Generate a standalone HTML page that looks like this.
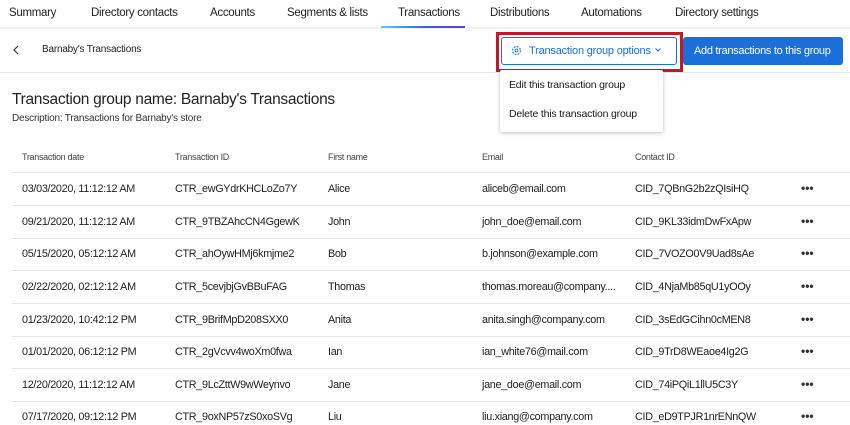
<!DOCTYPE html><html><head><style>
*{margin:0;padding:0;box-sizing:border-box}
body{width:850px;height:425px;overflow:hidden;background:#fff;font-family:"Liberation Sans",sans-serif;color:#1a1a1a;position:relative;font-size:11.5px}
.a{position:absolute;white-space:nowrap}
.tab{position:absolute;top:7px;font-size:11.5px;color:#222;letter-spacing:-0.3px}
.row{position:absolute;left:12px;width:838px;height:1px;background:#e6e6e6}
.c{position:absolute;font-size:10.8px;color:#222;letter-spacing:-0.3px}
.h{font-size:9px;color:#444}
.dots{position:absolute;left:801px;font-size:12px;font-weight:bold;letter-spacing:0px;color:#333}
</style></head><body>
<div class="tab" style="left:9px">Summary</div>
<div class="tab" style="left:91px">Directory contacts</div>
<div class="tab" style="left:210px">Accounts</div>
<div class="tab" style="left:287px">Segments &amp; lists</div>
<div class="tab" style="left:398px">Transactions</div>
<div class="tab" style="left:490px">Distributions</div>
<div class="tab" style="left:581px">Automations</div>
<div class="tab" style="left:675px">Directory settings</div>
<div class="a" style="left:0;top:27px;width:850px;height:2px;background:#f2f2f2"></div>
<div class="a" style="left:381px;top:26px;width:84px;height:2px;background:linear-gradient(90deg,#6ad0e8,#3a62d8,#6a3cc8)"></div>
<div class="a" style="left:0;top:72px;width:850px;height:1px;background:#e6e6e6"></div>
<svg class="a" style="left:13px;top:45px" width="6" height="10" viewBox="0 0 6 10"><path d="M5 1L1 5l4 4" fill="none" stroke="#333" stroke-width="1.2"/></svg>
<div class="a" style="left:42px;top:44px;font-size:10px;color:#222;letter-spacing:-0.2px">Barnaby's Transactions</div>
<div class="a" style="left:496px;top:32px;width:187px;height:40px;border:3px solid #c01a2a"></div>
<div class="a" style="left:501px;top:37px;width:176px;height:28px;border:1px solid #1a6fd8;border-radius:3px;color:#1a6fd8;font-size:11px;padding:7px 0 0 27px;letter-spacing:-0.2px">Transaction group options</div>
<svg class="a" style="left:655px;top:48px" width="6" height="4" viewBox="0 0 6 4"><path d="M.5.5l2.5 2.5L5.5.5" fill="none" stroke="#1a6fd8" stroke-width="1"/></svg>
<svg class="a" style="left:511px;top:45px" width="11" height="11" viewBox="0 0 12 12"><circle cx="6" cy="6" r="4.3" fill="none" stroke="#1a6fd8" stroke-width="1.2" stroke-dasharray="2 1.4"/><circle cx="6" cy="6" r="1.6" fill="none" stroke="#1a6fd8" stroke-width="1"/></svg>
<div class="a" style="left:683px;top:37px;width:160px;height:28px;background:#1a6fd8;border-radius:3px;color:#fff;font-size:11px;padding:8px 0 0 11px;letter-spacing:-0.3px">Add transactions to this group</div>
<div class="a" style="left:500px;top:70px;width:163px;height:62px;background:#fff;box-shadow:0 1px 4px rgba(0,0,0,.25);border-radius:2px"></div>
<div class="a" style="left:509px;top:79px;font-size:10.5px;letter-spacing:-0.2px">Edit this transaction group</div>
<div class="a" style="left:509px;top:108px;font-size:10.5px;letter-spacing:-0.2px">Delete this transaction group</div>
<div class="a" style="left:12px;top:91px;font-size:15.5px;color:#222;letter-spacing:-0.3px">Transaction group name: Barnaby's Transactions</div>
<div class="a" style="left:12px;top:113px;font-size:10px;color:#333;letter-spacing:-0.2px">Description: Transactions for Barnaby's store</div>
<div class="c h" style="left:22px;top:152px">Transaction date</div>
<div class="c h" style="left:175px;top:152px">Transaction ID</div>
<div class="c h" style="left:328px;top:152px">First name</div>
<div class="c h" style="left:482px;top:152px">Email</div>
<div class="c h" style="left:635px;top:152px">Contact ID</div>
<div class="row" style="top:172px"></div><div class="row" style="top:205px"></div><div class="row" style="top:238px"></div><div class="row" style="top:270px"></div><div class="row" style="top:303px"></div><div class="row" style="top:336px"></div><div class="row" style="top:368px"></div><div class="row" style="top:401px"></div>
<div class="c" style="left:22px;top:183px">03/03/2020, 11:12:12 AM</div><div class="c" style="left:175px;top:183px">CTR_ewGYdrKHCLoZo7Y</div><div class="c" style="left:328px;top:183px">Alice</div><div class="c" style="left:482px;top:183px">aliceb@email.com</div><div class="c" style="left:635px;top:183px">CID_7QBnG2b2zQIsiHQ</div><div class="dots" style="top:181px">•••</div>
<div class="c" style="left:22px;top:216px">09/21/2020, 11:12:12 AM</div><div class="c" style="left:175px;top:216px">CTR_9TBZAhcCN4GgewK</div><div class="c" style="left:328px;top:216px">John</div><div class="c" style="left:482px;top:216px">john_doe@email.com</div><div class="c" style="left:635px;top:216px">CID_9KL33idmDwFxApw</div><div class="dots" style="top:214px">•••</div>
<div class="c" style="left:22px;top:248px">05/15/2020, 05:12:12 AM</div><div class="c" style="left:175px;top:248px">CTR_ahOywHMj6kmjme2</div><div class="c" style="left:328px;top:248px">Bob</div><div class="c" style="left:482px;top:248px">b.johnson@example.com</div><div class="c" style="left:635px;top:248px">CID_7VOZO0V9Uad8sAe</div><div class="dots" style="top:246px">•••</div>
<div class="c" style="left:22px;top:281px">02/22/2020, 02:12:12 AM</div><div class="c" style="left:175px;top:281px">CTR_5cevjbjGvBBuFAG</div><div class="c" style="left:328px;top:281px">Thomas</div><div class="c" style="left:482px;top:281px">thomas.moreau@company....</div><div class="c" style="left:635px;top:281px">CID_4NjaMb85qU1yOOy</div><div class="dots" style="top:279px">•••</div>
<div class="c" style="left:22px;top:314px">01/23/2020, 10:42:12 PM</div><div class="c" style="left:175px;top:314px">CTR_9BrifMpD208SXX0</div><div class="c" style="left:328px;top:314px">Anita</div><div class="c" style="left:482px;top:314px">anita.singh@company.com</div><div class="c" style="left:635px;top:314px">CID_3sEdGCihn0cMEN8</div><div class="dots" style="top:312px">•••</div>
<div class="c" style="left:22px;top:346px">01/01/2020, 06:12:12 PM</div><div class="c" style="left:175px;top:346px">CTR_2gVcvv4woXm0fwa</div><div class="c" style="left:328px;top:346px">Ian</div><div class="c" style="left:482px;top:346px">ian_white76@mail.com</div><div class="c" style="left:635px;top:346px">CID_9TrD8WEaoe4Ig2G</div><div class="dots" style="top:344px">•••</div>
<div class="c" style="left:22px;top:379px">12/20/2020, 11:12:12 AM</div><div class="c" style="left:175px;top:379px">CTR_9LcZttW9wWeynvo</div><div class="c" style="left:328px;top:379px">Jane</div><div class="c" style="left:482px;top:379px">jane_doe@email.com</div><div class="c" style="left:635px;top:379px">CID_74iPQiL1llU5C3Y</div><div class="dots" style="top:377px">•••</div>
<div class="c" style="left:22px;top:411px">07/17/2020, 09:12:12 PM</div><div class="c" style="left:175px;top:411px">CTR_9oxNP57zS0xoSVg</div><div class="c" style="left:328px;top:411px">Liu</div><div class="c" style="left:482px;top:411px">liu.xiang@company.com</div><div class="c" style="left:635px;top:411px">CID_eD9TPJR1nrENnQW</div><div class="dots" style="top:409px">•••</div>
</body></html>
